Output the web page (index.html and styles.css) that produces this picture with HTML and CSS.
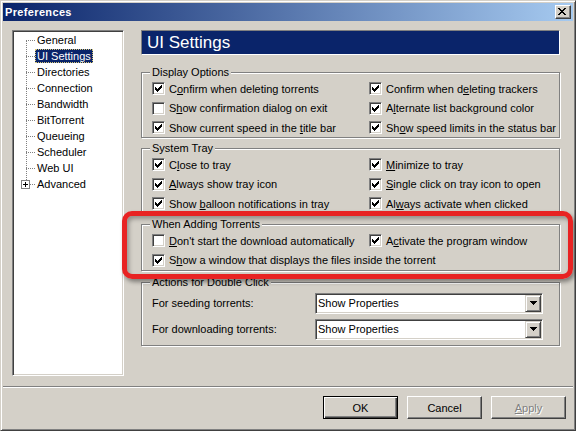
FILE: index.html
```html
<!DOCTYPE html>
<html>
<head>
  <title>Preferences</title>
  <link rel="stylesheet" href="styles.css">
</head>
<body>
  <div class="window">
    <div class="titlebar">
      <span class="title">Preferences</span>
      <span class="close">
        <svg width="8" height="7" viewBox="0 0 8 7"><path d="M0 0h2v1H0zM6 0h2v1H6zM1 1h2v1H1zM5 1h2v1H5zM2 2h4v1H2zM3 3h2v1H3zM2 4h4v1H2zM1 5h2v1H1zM5 5h2v1H5zM0 6h2v1H0zM6 6h2v1H6z" fill="#000"/></svg>
      </span>
    </div>

    <div class="content">
      <div class="tree">
        <ul class="tree-list">
          <li><span class="label">General</span></li>
          <li class="selected"><span class="label">UI Settings</span></li>
          <li><span class="label">Directories</span></li>
          <li><span class="label">Connection</span></li>
          <li><span class="label">Bandwidth</span></li>
          <li><span class="label">BitTorrent</span></li>
          <li><span class="label">Queueing</span></li>
          <li><span class="label">Scheduler</span></li>
          <li><span class="label">Web UI</span></li>
          <li class="branch">
            <span class="expander"><svg width="9" height="9" viewBox="0 0 9 9"><rect x="0.5" y="0.5" width="8" height="8" fill="#fff" stroke="#808080"/><path d="M2 4h5v1H2zM4 2h1v5H4z" fill="#000"/></svg></span>
            <span class="stub"></span>
            <span class="label">Advanced</span>
          </li>
        </ul>
      </div>

      <div class="panel">
        <div class="panel-title">UI Settings</div>

        <div class="group first">
          <span class="group-title">Display Options</span>
          <div class="checks">
            <label class="check"><span class="box"><svg width="11" height="11" viewBox="0 0 11 11"><path d="M2 4h1v3H2zM3 5h1v3H3zM4 6h1v3H4zM5 5h1v3H5zM6 4h1v3H6zM7 3h1v3H7zM8 2h1v3H8z"/></svg></span><span>C<u>o</u>nfirm when deleting torrents</span></label>
            <label class="check"><span class="box"><svg width="11" height="11" viewBox="0 0 11 11"><path d="M2 4h1v3H2zM3 5h1v3H3zM4 6h1v3H4zM5 5h1v3H5zM6 4h1v3H6zM7 3h1v3H7zM8 2h1v3H8z"/></svg></span><span>Confirm when d<u>e</u>leting trackers</span></label>
            <label class="check"><span class="box"></span><span>S<u>h</u>ow confirmation dialog on exit</span></label>
            <label class="check"><span class="box"><svg width="11" height="11" viewBox="0 0 11 11"><path d="M2 4h1v3H2zM3 5h1v3H3zM4 6h1v3H4zM5 5h1v3H5zM6 4h1v3H6zM7 3h1v3H7zM8 2h1v3H8z"/></svg></span><span>A<u>l</u>ternate list background color</span></label>
            <label class="check"><span class="box"><svg width="11" height="11" viewBox="0 0 11 11"><path d="M2 4h1v3H2zM3 5h1v3H3zM4 6h1v3H4zM5 5h1v3H5zM6 4h1v3H6zM7 3h1v3H7zM8 2h1v3H8z"/></svg></span><span>Show current speed in the <u>t</u>itle bar</span></label>
            <label class="check"><span class="box"><svg width="11" height="11" viewBox="0 0 11 11"><path d="M2 4h1v3H2zM3 5h1v3H3zM4 6h1v3H4zM5 5h1v3H5zM6 4h1v3H6zM7 3h1v3H7zM8 2h1v3H8z"/></svg></span><span>Sh<u>o</u>w speed limits in the status bar</span></label>
          </div>
        </div>

        <div class="group">
          <span class="group-title">System Tray</span>
          <div class="checks">
            <label class="check"><span class="box"><svg width="11" height="11" viewBox="0 0 11 11"><path d="M2 4h1v3H2zM3 5h1v3H3zM4 6h1v3H4zM5 5h1v3H5zM6 4h1v3H6zM7 3h1v3H7zM8 2h1v3H8z"/></svg></span><span>C<u>l</u>ose to tray</span></label>
            <label class="check"><span class="box"><svg width="11" height="11" viewBox="0 0 11 11"><path d="M2 4h1v3H2zM3 5h1v3H3zM4 6h1v3H4zM5 5h1v3H5zM6 4h1v3H6zM7 3h1v3H7zM8 2h1v3H8z"/></svg></span><span><u>M</u>inimize to tray</span></label>
            <label class="check"><span class="box"><svg width="11" height="11" viewBox="0 0 11 11"><path d="M2 4h1v3H2zM3 5h1v3H3zM4 6h1v3H4zM5 5h1v3H5zM6 4h1v3H6zM7 3h1v3H7zM8 2h1v3H8z"/></svg></span><span><u>A</u>lways show tray icon</span></label>
            <label class="check"><span class="box"><svg width="11" height="11" viewBox="0 0 11 11"><path d="M2 4h1v3H2zM3 5h1v3H3zM4 6h1v3H4zM5 5h1v3H5zM6 4h1v3H6zM7 3h1v3H7zM8 2h1v3H8z"/></svg></span><span><u>S</u>ingle click on tray icon to open</span></label>
            <label class="check"><span class="box"><svg width="11" height="11" viewBox="0 0 11 11"><path d="M2 4h1v3H2zM3 5h1v3H3zM4 6h1v3H4zM5 5h1v3H5zM6 4h1v3H6zM7 3h1v3H7zM8 2h1v3H8z"/></svg></span><span>Show <u>b</u>alloon notifications in tray</span></label>
            <label class="check"><span class="box"><svg width="11" height="11" viewBox="0 0 11 11"><path d="M2 4h1v3H2zM3 5h1v3H3zM4 6h1v3H4zM5 5h1v3H5zM6 4h1v3H6zM7 3h1v3H7zM8 2h1v3H8z"/></svg></span><span>Al<u>w</u>ays activate when clicked</span></label>
          </div>
        </div>

        <div class="group adding">
          <span class="group-title">When Adding Torrents</span>
          <div class="checks">
            <label class="check"><span class="box"></span><span><u>D</u>on't start the download automatically</span></label>
            <label class="check"><span class="box"><svg width="11" height="11" viewBox="0 0 11 11"><path d="M2 4h1v3H2zM3 5h1v3H3zM4 6h1v3H4zM5 5h1v3H5zM6 4h1v3H6zM7 3h1v3H7zM8 2h1v3H8z"/></svg></span><span>A<u>c</u>tivate the program window</span></label>
            <label class="check wide"><span class="box"><svg width="11" height="11" viewBox="0 0 11 11"><path d="M2 4h1v3H2zM3 5h1v3H3zM4 6h1v3H4zM5 5h1v3H5zM6 4h1v3H6zM7 3h1v3H7zM8 2h1v3H8z"/></svg></span><span>S<u>h</u>ow a window that displays the files inside the torrent</span></label>
          </div>
        </div>

        <div class="group actions">
          <span class="group-title">Actions for Double Click</span>
          <div class="field">
            <span class="field-label">For seeding torrents:</span>
            <div class="select">
              <span class="select-text">Show Properties</span>
              <span class="select-arrow"><svg width="7" height="4" viewBox="0 0 7 4"><path d="M0 0h7v1H0zM1 1h5v1H1zM2 2h3v1H2zM3 3h1v1H3z"/></svg></span>
            </div>
          </div>
          <div class="field">
            <span class="field-label">For downloading torrents:</span>
            <div class="select">
              <span class="select-text">Show Properties</span>
              <span class="select-arrow"><svg width="7" height="4" viewBox="0 0 7 4"><path d="M0 0h7v1H0zM1 1h5v1H1zM2 2h3v1H2zM3 3h1v1H3z"/></svg></span>
            </div>
          </div>
        </div>
      </div>
    </div>

    <div class="separator"></div>

    <div class="buttons">
      <button class="btn default">OK</button>
      <button class="btn">Cancel</button>
      <button class="btn disabled"><u>A</u>pply</button>
    </div>

    <div class="highlight"></div>
  </div>
</body>
</html>
```

FILE: styles.css
```css
/* Win2k style preferences dialog */

body {
  margin: 0;
  font-family: "Liberation Sans", Arial, sans-serif;
  font-size: 11px;
  color: #000;
}

.window {
  position: relative;
  width: 576px;
  height: 431px;
  box-sizing: border-box;
  padding: 2px;
  background-color: #d4d0c8;
  border: 1px solid;
  border-color: #d4d0c8 #404040 #404040 #d4d0c8;
  box-shadow: inset 1px 1px #fff, inset -1px -1px #808080;
  display: flex;
  flex-direction: column;
}

/* title bar */

.titlebar {
  height: 18px;
  padding: 0 2px;
  display: flex;
  align-items: center;
  justify-content: space-between;
  background: linear-gradient(to right, #0a246a, #a6caf0);
}

.title {
  color: #fff;
  font-weight: bold;
  font-size: 11px;
  letter-spacing: 0.35px;
}

.close {
  width: 16px;
  height: 14px;
  box-sizing: border-box;
  padding: 2px 0 0 2px;
  background-color: #d4d0c8;
  border: 1px solid;
  border-color: #fff #404040 #404040 #fff;
  box-shadow: inset -1px -1px #808080;
}

.close svg {
  display: block;
}

/* body */

.content {
  height: 355px;
  box-sizing: border-box;
  padding: 9px 0 0 9px;
  display: flex;
  gap: 17px;
}

.tree {
  width: 112px;
  height: 346px;
  box-sizing: border-box;
  padding: 1px;
  background-color: #fff;
  border: 1px solid;
  border-color: #808080 #fff #fff #808080;
  box-shadow: inset 1px 1px #404040, inset -1px -1px #d4d0c8;
}

.tree-list {
  position: relative;
  list-style: none;
  margin: 0;
  padding: 0;
}

.tree-list::after {
  content: "";
  position: absolute;
  left: 12px;
  top: 8px;
  height: 140px;
  border-left: 1px dotted #808080;
}

.tree-list li {
  height: 16px;
  display: flex;
  align-items: center;
}

.tree-list li::before {
  content: "";
  width: 9px;
  margin-left: 12px;
  border-top: 1px dotted #808080;
}

.tree-list li.branch::before {
  display: none;
}

.expander {
  margin-left: 7px;
  height: 9px;
}

.expander svg {
  display: block;
}

.stub {
  width: 5px;
  border-top: 1px dotted #808080;
}

.label {
  padding: 0 1px;
  line-height: 12px;
  border: 1px solid transparent;
  white-space: nowrap;
}

.selected .label {
  background-color: #0a246a;
  color: #fff;
  border: 1px dotted #d8c878;
}

/* right panel */

.panel {
  width: 419px;
  display: flex;
  flex-direction: column;
}

.panel-title {
  height: 25px;
  box-sizing: border-box;
  padding-left: 5px;
  display: flex;
  align-items: center;
  background-color: #0a246a;
  color: #fff;
  font-size: 17px;
  border: 1px solid;
  border-color: #808080 #fff #fff #808080;
}

.group {
  margin-top: 10px;
  padding: 0 10px 3px;
  border: 1px solid #808080;
  box-shadow: 1px 1px #fff, inset 1px 1px #fff;
}

.group.first {
  margin-top: 17px;
}

.group.adding {
  margin-top: 10px;
}

.group.actions {
  margin-top: 11px;
  padding-bottom: 5px;
}

.group-title {
  display: block;
  width: max-content;
  margin: -7px 0 3px -2px;
  padding: 0 2px;
  line-height: 13px;
  background-color: #d4d0c8;
}

.group.actions .group-title {
  margin-bottom: 4px;
}

.checks {
  display: grid;
  grid-template-columns: 217px auto;
  row-gap: 6.5px;
}

.check {
  height: 13px;
  display: flex;
  align-items: center;
  gap: 4px;
  white-space: nowrap;
}

.check.wide {
  grid-column: 1 / 3;
}

.box {
  flex: none;
  width: 13px;
  height: 13px;
  box-sizing: border-box;
  background-color: #fff;
  border: 1px solid;
  border-color: #808080 #fff #fff #808080;
  box-shadow: inset 1px 1px #404040, inset -1px -1px #d4d0c8;
}

.box svg {
  display: block;
}

.field {
  display: flex;
  align-items: center;
  margin-bottom: 5px;
}

.field:last-child {
  margin-bottom: 0;
}

.field-label {
  width: 163px;
}

.select {
  width: 228px;
  height: 21px;
  box-sizing: border-box;
  padding: 1px;
  display: flex;
  background-color: #fff;
  border: 1px solid;
  border-color: #808080 #fff #fff #808080;
  box-shadow: inset 1px 1px #404040, inset -1px -1px #d4d0c8;
}

.select-text {
  flex: 1;
  padding-left: 1px;
  line-height: 17px;
}

.select-arrow {
  width: 16px;
  height: 17px;
  box-sizing: border-box;
  display: flex;
  align-items: center;
  justify-content: center;
  background-color: #d4d0c8;
  border: 1px solid;
  border-color: #d4d0c8 #404040 #404040 #d4d0c8;
  box-shadow: inset 1px 1px #fff, inset -1px -1px #808080;
}

.select-arrow svg {
  display: block;
}

/* bottom */

.separator {
  margin-top: 10px;
  border-top: 1px solid #808080;
  border-bottom: 1px solid #fff;
}

.buttons {
  margin-top: 8px;
  padding-right: 7px;
  display: flex;
  justify-content: flex-end;
  gap: 9px;
}

.btn {
  width: 75px;
  height: 23px;
  box-sizing: border-box;
  padding: 0;
  font-family: "Liberation Sans", Arial, sans-serif;
  font-size: 11px;
  color: #000;
  background-color: #d4d0c8;
  border: 1px solid;
  border-color: #fff #404040 #404040 #fff;
  box-shadow: inset -1px -1px #808080;
}

.btn.default {
  border-color: #000;
  box-shadow: inset 1px 1px #fff, inset -1px -1px #404040, inset -2px -2px #808080;
}

.btn.disabled {
  color: #808080;
  text-shadow: 1px 1px #fff;
}

/* red annotation frame */

.highlight {
  position: absolute;
  left: 121px;
  top: 210px;
  width: 451px;
  height: 68px;
  box-sizing: border-box;
  border: 5px solid #e82323;
  border-radius: 10px;
  box-shadow: 2px 3px 4px rgba(0, 0, 0, 0.4), inset 2px 3px 4px rgba(0, 0, 0, 0.3);
}
```
